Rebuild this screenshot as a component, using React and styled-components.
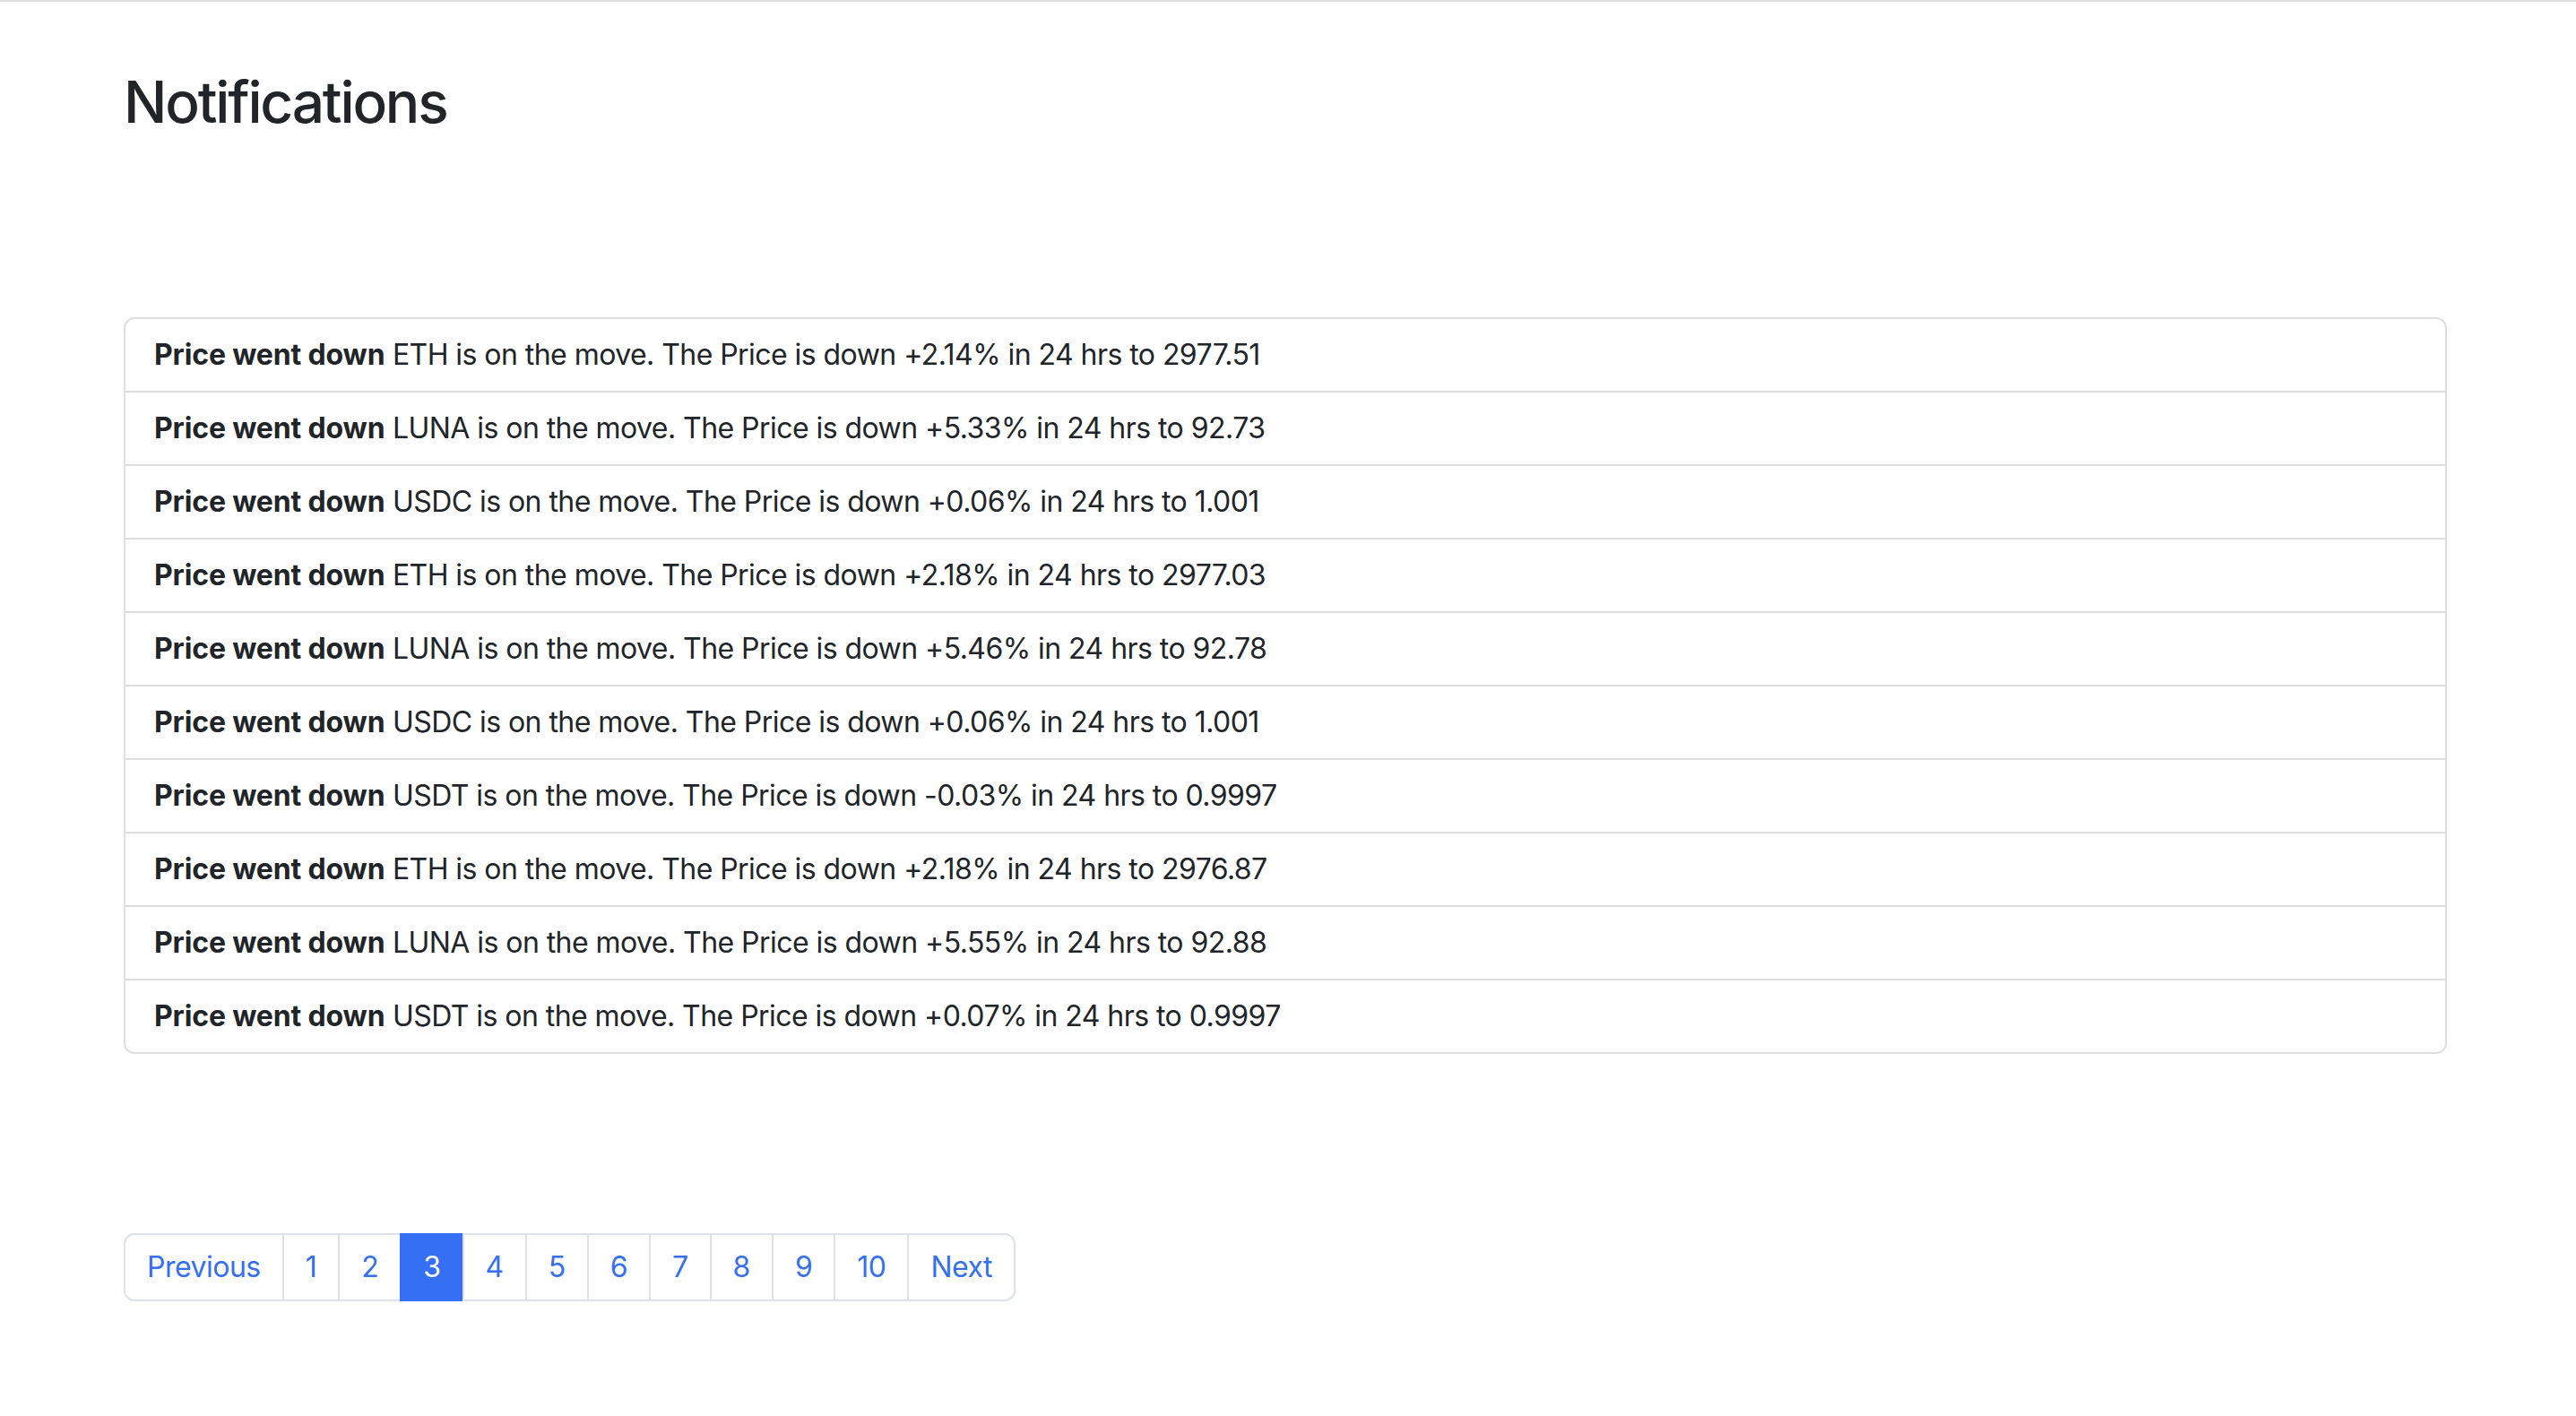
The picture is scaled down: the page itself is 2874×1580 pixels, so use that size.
import React from 'react'
import styled, { createGlobalStyle } from 'styled-components'

const GlobalStyle = createGlobalStyle`
  html, body {
    margin: 0;
    padding: 0;
    background: #fff;
  }
  body {
    font-family: Inter, "Noto Sans", "Liberation Sans", sans-serif;
    font-size: 32px;
    line-height: 1.5;
    color: #212529;
  }
`

const notifications = [
    { coin: 'ETH', change: '+2.14%', price: '2977.51' },
    { coin: 'LUNA', change: '+5.33%', price: '92.73' },
    { coin: 'USDC', change: '+0.06%', price: '1.001' },
    { coin: 'ETH', change: '+2.18%', price: '2977.03' },
    { coin: 'LUNA', change: '+5.46%', price: '92.78' },
    { coin: 'USDC', change: '+0.06%', price: '1.001' },
    { coin: 'USDT', change: '-0.03%', price: '0.9997' },
    { coin: 'ETH', change: '+2.18%', price: '2976.87' },
    { coin: 'LUNA', change: '+5.55%', price: '92.88' },
    { coin: 'USDT', change: '+0.07%', price: '0.9997' },
]

const pages = ['Previous', '1', '2', '3', '4', '5', '6', '7', '8', '9', '10', 'Next']

export default function App() {
    return (
        <>
            <GlobalStyle />
            <TopRule />
            <Container>
                <Title>Notifications</Title>
                <ListGroup>
                    {notifications.map((n, i) => (
                        <ListItem key={i}>
                            <strong>Price went down</strong> {n.coin} is on the move. The Price is down {n.change} in 24 hrs to {n.price}
                        </ListItem>
                    ))}
                </ListGroup>
                <Pagination>
                    {pages.map((p) => (
                        <PageLink key={p} active={p === '3'}>{p}</PageLink>
                    ))}
                </Pagination>
            </Container>
        </>
    )
}

const TopRule = styled.div`
    height: 2px;
    background: #dedede;
`

const Container = styled.div`
    width: 2592px;
    margin-left: 138px;
    padding-top: 74px;
    padding-bottom: 120px;
`

const Title = styled.h2`
    margin: 0 0 201px;
    font-size: 64px;
    font-weight: 500;
    line-height: 1.2;
    letter-spacing: -2.2px;
`

const ListGroup = styled.ul`
    margin: 0 0 200px;
    padding: 0;
    list-style: none;
    border: 2px solid #dfdfdf;
    border-radius: 12px;
    overflow: hidden;
`

const ListItem = styled.li`
    padding: 16px 32px;
    height: 80px;
    box-sizing: border-box;
    letter-spacing: -0.55px;
    & + & {
        border-top: 2px solid #dfdfdf;
        height: 82px;
    }
    strong {
        font-weight: 700;
        letter-spacing: -0.15px;
    }
`

const Pagination = styled.nav`
    display: flex;
`

const PageLink = styled.a`
    display: block;
    padding: 12px 24px;
    font-size: 32px;
    line-height: 48px;
    letter-spacing: -0.5px;
    color: ${(p) => (p.active ? '#fff' : '#3570f2')};
    background: ${(p) => (p.active ? '#356ff4' : '#fff')};
    border: 2px solid ${(p) => (p.active ? '#356ff4' : '#dee2e6')};
    cursor: pointer;
    & + & {
        margin-left: -2px;
    }
    &:first-child {
        border-radius: 12px 0 0 12px;
    }
    &:last-child {
        border-radius: 0 12px 12px 0;
    }
`
